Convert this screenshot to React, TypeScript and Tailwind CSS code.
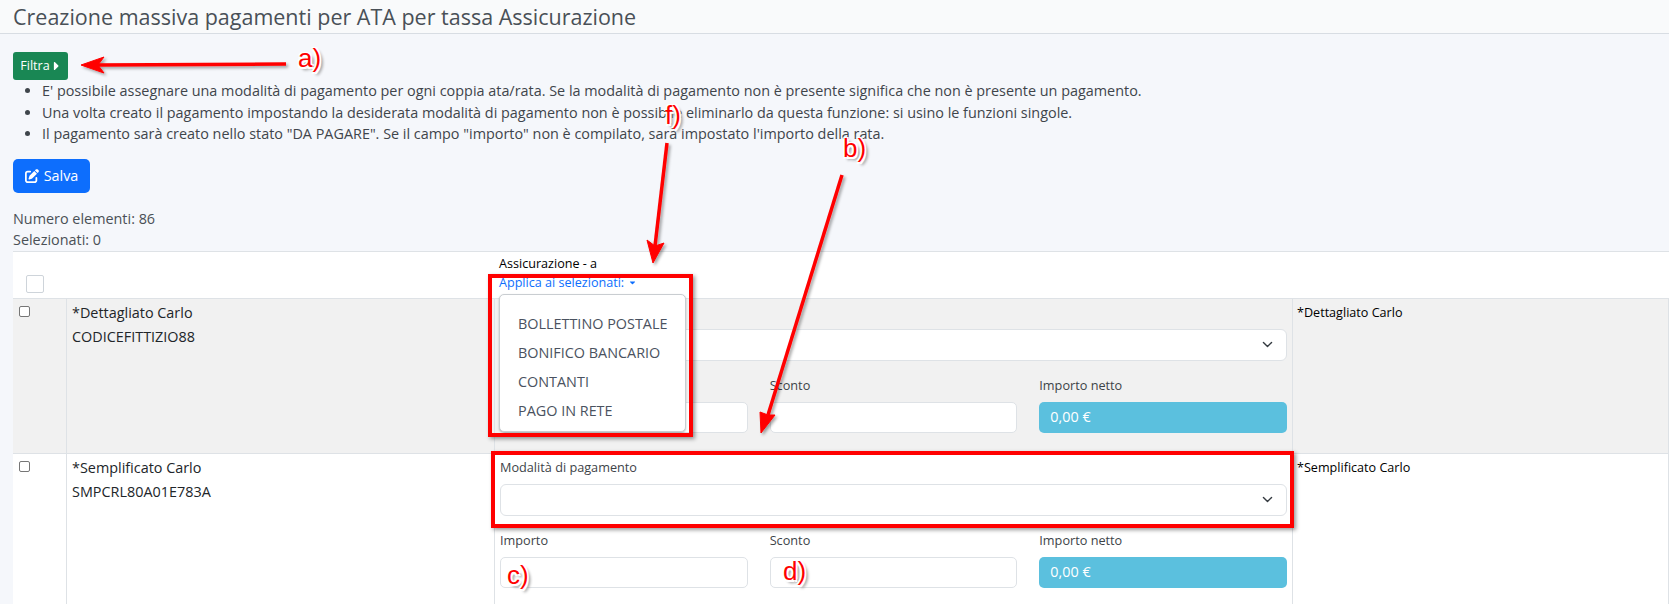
import { FaCaretRight, FaCaretDown } from 'react-icons/fa';
import { FaPenToSquare } from 'react-icons/fa6';

const notes = [
  "E' possibile assegnare una modalità di pagamento per ogni coppia ata/rata. Se la modalità di pagamento non è presente significa che non è presente un pagamento.",
  'Una volta creato il pagamento impostando la desiderata modalità di pagamento non è possibile eliminarlo da questa funzione: si usino le funzioni singole.',
  'Il pagamento sarà creato nello stato "DA PAGARE". Se il campo "importo" non è compilato, sarà impostato l\'importo della rata.',
];

const paymentMethods = ['BOLLETTINO POSTALE', 'BONIFICO BANCARIO', 'CONTANTI', 'PAGO IN RETE'];

const rows = [
  { name: '*Dettagliato Carlo', code: 'CODICEFITTIZIO88', striped: true },
  { name: '*Semplificato Carlo', code: 'SMPCRL80A01E783A', striped: false },
];

const calloutText =
  "absolute font-['Liberation_Sans',sans-serif] text-[26px] leading-none text-[#f00] [text-shadow:1.5px_1.5px_0_#fff,-1.5px_-1.5px_0_#fff,1.5px_-1.5px_0_#fff,-1.5px_1.5px_0_#fff,3px_3px_3px_#888]";

function PaymentRow({ name, code, striped }: { name: string; code: string; striped: boolean }) {
  const bg = striped ? 'bg-[#f1f1f1]' : 'bg-white';
  return (
    <div className={`grid h-[155px] grid-cols-[53px_428px_798px_1fr] border-b border-[#dee2e6] ${bg}`}>
      <div className="pl-[6px] pt-[7px]">
        <input type="checkbox" className="block h-[11px] w-[11px] appearance-none rounded-[2px] border border-[#767676] bg-white" />
      </div>
      <div className="border-l border-[#dee2e6] pl-[5px] pt-[2px] text-[14.4px] leading-[24px] text-[#212529]">
        <div>{name}</div>
        <div>{code}</div>
      </div>
      <div className="border-l border-[#dee2e6] px-[5px] pt-[3px]">
        <label className="block h-[27px] text-[12.7px] font-medium leading-[20px] text-[#3d4348]">Modalità di pagamento</label>
        <div className="flex h-[32px] items-center justify-end rounded-[6px] border border-[#dee2e6] bg-white pr-[12px]">
          <svg viewBox="0 0 16 16" className="h-[13px] w-[13px]" fill="none" stroke="#343a40" strokeWidth="1.7" strokeLinecap="round" strokeLinejoin="round">
            <path d="m3 5.5 5 5 5-5" />
          </svg>
        </div>
        <div className="mt-[14px] grid grid-cols-3 gap-x-[22px]">
          <Field label="Importo" />
          <Field label="Sconto" />
          <div>
            <label className="block h-[27px] text-[12.7px] font-medium leading-[20px] text-[#3d4348]">Importo netto</label>
            <div className="flex h-[31px] items-center rounded-[5px] bg-[#5bc0de] pl-[11px] text-[14.4px] text-white">0,00 €</div>
          </div>
        </div>
      </div>
      <div className="border-x border-[#dee2e6] pl-[4px] pt-[4px] text-[12.6px] font-medium leading-[20px] text-black">{name}</div>
    </div>
  );
}

function Field({ label }: { label: string }) {
  return (
    <div>
      <label className="block h-[27px] text-[12.7px] font-medium leading-[20px] text-[#3d4348]">{label}</label>
      <div className="h-[31px] rounded-[5px] border border-[#dee2e6] bg-white" />
    </div>
  );
}

export default function App() {
  return (
    <div className="relative h-[604px] overflow-hidden bg-[#f5f7fb] font-['Open_Sans',sans-serif] text-[14.4px] text-[#4a5056]">
      {/* Page title */}
      <header className="flex h-[34px] items-center border-b border-[#d8dde3] bg-[#f9fafb] pl-[13px]">
        <h1 className="text-[21.5px] leading-none text-[#495057]">Creazione massiva pagamenti per ATA per tassa Assicurazione</h1>
      </header>

      <main className="pt-[18px]">
        <div className="pl-[13px]">
          <button className="flex h-[28px] w-[55px] items-center justify-center gap-[2px] rounded-[3px] bg-[#198754] text-[12.6px] text-white">
            Filtra <FaCaretRight className="h-[14px] w-[9px]" />
          </button>
          <ul className="list-disc pl-[29px] leading-[21.5px] text-[#3f454b]">
            {notes.map((note) => (
              <li key={note}>{note}</li>
            ))}
          </ul>
          <button className="mt-[14px] flex h-[34px] w-[77px] items-center justify-center gap-[5px] rounded-[5px] bg-[#0d6efd] text-white">
            <FaPenToSquare className="h-[14px] w-[14px]" /> Salva
          </button>
          <div className="mt-[15px] leading-[21px]">
            <div>Numero elementi: 86</div>
            <div>Selezionati: 0</div>
          </div>
        </div>

        {/* Table */}
        <div className="ml-[13px] mt-[1px] border-t border-[#dee2e6]">
          <div className="grid h-[47px] grid-cols-[53px_428px_798px_1fr] border-b border-[#dee2e6] bg-white">
            <div className="pl-[13px] pt-[23px]">
              <input type="checkbox" className="block h-[18px] w-[18px] appearance-none rounded-[2px] border border-[#ced4da] bg-white" />
            </div>
            <div />
            <div className="pl-[5px] pt-[2px] text-[12.6px]">
              <div className="font-medium leading-[20px] text-black">Assicurazione - a</div>
              <div className="flex items-center gap-[4px] leading-[18px] text-[#0d6efd]">
                Applica ai selezionati: <FaCaretDown className="h-[9px] w-[9px]" />
              </div>
            </div>
            <div />
          </div>
          {rows.map((row) => (
            <PaymentRow key={row.code} {...row} />
          ))}
        </div>
      </main>

      {/* Open dropdown menu */}
      <div className="absolute left-[499px] top-[294px] h-[138px] w-[187px] rounded-[5px] border border-[#c9cdd1] bg-white pl-[18px] pt-[14px] text-[14.4px] leading-[29px] text-[#4a5260] shadow-[0_1px_2px_rgba(0,0,0,0.25)]">
        {paymentMethods.map((method) => (
          <div key={method}>{method}</div>
        ))}
      </div>

      {/* Red annotations */}
      <div className="absolute left-[488px] top-[274px] h-[163px] w-[205px] border-4 border-[#f00] shadow-[2px_2px_4px_rgba(0,0,0,0.4)]" />
      <div className="absolute left-[491px] top-[451px] h-[77px] w-[803px] border-4 border-[#f00] shadow-[2px_2px_4px_rgba(0,0,0,0.4)]" />
      <svg className="pointer-events-none absolute left-0 top-0 h-[604px] w-[1669px]" viewBox="0 0 1669 604">
        <defs>
          <filter id="arrowShadow" x="-20%" y="-20%" width="140%" height="140%">
            <feDropShadow dx="2" dy="2" stdDeviation="1.5" floodColor="#000" floodOpacity="0.35" />
          </filter>
        </defs>
        <g filter="url(#arrowShadow)" fill="#f00" stroke="#f00">
          <path d="M286 64 L98 65" strokeWidth="3.5" />
          <path d="M81 65 L104 57 L98 65 L104 73 Z" strokeWidth="1" />
          <path d="M667 143 L655 246" strokeWidth="3.5" />
          <path d="M653 263 L647 240 L655 246 L664 243 Z" strokeWidth="1" />
          <path d="M842 175 L768 415" strokeWidth="3.5" />
          <path d="M761 433 L760 412 L768 415 L775 415 Z" strokeWidth="1" />
        </g>
      </svg>
      <span className={`${calloutText} left-[298px] top-[45px]`}>a)</span>
      <span className={`${calloutText} left-[665px] top-[102px]`}>f)</span>
      <span className={`${calloutText} left-[843px] top-[135px]`}>b)</span>
      <span className={`${calloutText} left-[507px] top-[562px]`}>c)</span>
      <span className={`${calloutText} left-[783px] top-[558px]`}>d)</span>
    </div>
  );
}
